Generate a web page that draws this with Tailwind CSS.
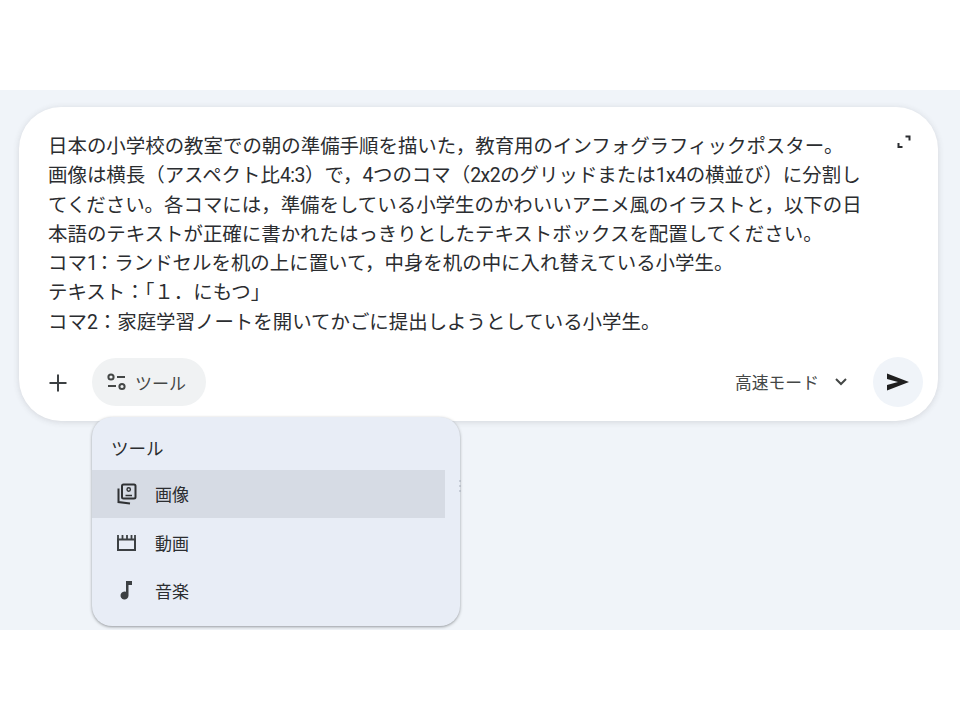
<!DOCTYPE html>
<html lang="ja">

<head>
    <meta charset="UTF-8">
    <title>ツール</title>
    <script src="https://cdn.jsdelivr.net/npm/@tailwindcss/browser@4"></script>
</head>

<body class="bg-white font-['Roboto','Noto_Sans_CJK_JP',sans-serif]">
    <div class="h-[720px] pt-[90px]">
        <section class="relative h-[540px] bg-[#f0f4f9] pl-[19px] pt-[17px]">
            <!-- prompt card -->
            <div class="relative flex h-[314px] w-[919px] flex-col rounded-[42px] bg-white shadow-[0_1px_6px_rgba(60,64,67,0.16)]">
                <div class="flex-1 whitespace-nowrap pl-[29px] pt-[25px] text-[19.45px] leading-[29.3px] text-[#2b2d30]">
                    <p>日本の小学校の教室での朝の準備手順を描いた，教育用のインフォグラフィックポスター。</p>
                    <p>画像は横長（アスペクト比<span class="tracking-[-0.5px]">4:3</span>）で，<span class="tracking-[-0.5px]">4</span>つのコマ（<span class="tracking-[-0.5px]">2x2</span>のグリッドまたは<span class="tracking-[-0.5px]">1x4</span>の横並び）に分割し</p>
                    <p>てください。各コマには，準備をしている小学生のかわいいアニメ風のイラストと，以下の日</p>
                    <p>本語のテキストが正確に書かれたはっきりとしたテキストボックスを配置してください。</p>
                    <p>コマ<span class="tracking-[-3px]">1</span>：ランドセルを机の上に置いて，中身を机の中に入れ替えている小学生。</p>
                    <p>テキスト：「１．にもつ」</p>
                    <p>コマ2：家庭学習ノートを開いてかごに提出しようとしている小学生。</p>
                </div>
                <svg class="absolute left-[877px] top-[27px] h-[16px] w-[16px]" viewBox="0 0 16 16" fill="none" stroke="#2b2d30" stroke-width="2">
                    <path d="M9.500 2.500h4v4M2.500 9v4h4" />
                </svg>
                <div class="mb-[14px] flex h-[50px] items-center">
                    <svg class="ml-[29px] mt-[1px] h-[20px] w-[20px]" viewBox="0 0 20 20" fill="none" stroke="#3c4043" stroke-width="2">
                        <path d="M10 1.500v17M1.500 10h17" />
                    </svg>
                    <div class="ml-[24px] flex h-[48px] w-[114px] items-center rounded-full bg-[#f0f2f3] pl-[15px]">
                        <svg class="h-[20px] w-[20px]" viewBox="0 0 20 20" fill="none" stroke="#444746" stroke-width="2">
                            <circle cx="4" cy="5" r="2.600" />
                            <path d="M10 5h8M1 14h8" />
                            <circle cx="15" cy="14.500" r="2.600" />
                        </svg>
                        <span class="ml-[8px] pt-[6px] text-[17px] text-[#444746]">ツール</span>
                    </div>
                    <span class="ml-[529px] pt-[3px] text-[16.800px] text-[#444746]">高速モード</span>
                    <svg class="ml-[15px] h-[14px] w-[14px]" viewBox="0 0 14 14" fill="none" stroke="#444746" stroke-width="2">
                        <path d="M2 4l5 5 5-5" />
                    </svg>
                    <div class="ml-[25px] flex h-[50px] w-[50px] items-center justify-center rounded-full bg-[#f0f4f9]">
                        <svg class="h-[24px] w-[24px]" viewBox="0 0 24 24" fill="#1f1f1f">
                            <path d="M1 3.500l22 8.500-22 8.500 0-5.500 11-3-11-3z" />
                        </svg>
                    </div>
                </div>
            </div>

            <!-- tools menu -->
            <div class="absolute left-[92px] top-[327px] h-[209px] w-[368px] rounded-[20px] bg-[#e8edf6] shadow-[0_1px_3px_rgba(60,64,67,0.5)]">
                <div class="flex h-[53px] items-center pl-[19px] pt-[11px] text-[17.500px] text-[#2b2d30]">ツール</div>
                <div class="flex h-[48px] w-[353px] items-center bg-[#d6dbe4]">
                    <svg class="ml-[23px] h-[22px] w-[22px]" viewBox="0 0 22 22" fill="none" stroke="#2f3133" stroke-width="2">
                        <rect x="7" y="1.500" width="13.500" height="14" rx="1.500" />
                        <path d="M3.500 5.500v13.500l11.500 1.500" />
                        <circle cx="13.700" cy="6.500" r="1.700" stroke-width="1.400" />
                        <path d="M10.500 12.500h6.500" stroke-width="1.500" />
                    </svg>
                    <span class="ml-[18px] pt-[3px] text-[17px] text-[#2b2d30]">画像</span>
                </div>
                <div class="flex h-[48px] items-center">
                    <svg class="ml-[23px] mt-[1px] h-[22px] w-[22px]" viewBox="0 0 22 22" fill="none" stroke="#3c4043" stroke-width="2">
                        <path d="M3 7.500h17v10.500h-17z" />
                        <path d="M3 8v-5M7.500 8v-5M12 8v-5M16.500 8v-5M20 8v-5" stroke-width="1.800" />
                    </svg>
                    <span class="ml-[18px] pt-[5px] text-[17px] text-[#2b2d30]">動画</span>
                </div>
                <div class="flex h-[48px] items-center">
                    <svg class="ml-[23px] h-[22px] w-[22px]" viewBox="0 0 22 22" fill="#3c4043">
                        <path d="M11 2h6v4h-3.500v10.500a4 4 0 1 1-2.500-3.700z" />
                    </svg>
                    <span class="ml-[18px] pt-[5px] text-[17px] text-[#2b2d30]">音楽</span>
                </div>
            </div>
            <!-- faint dots beside the menu -->
            <div class="absolute left-[459px] top-[390px] flex flex-col gap-[3px]">
                <span class="h-[2px] w-[2px] bg-gray-400/40"></span>
                <span class="h-[2px] w-[2px] bg-gray-400/40"></span>
                <span class="h-[2px] w-[2px] bg-gray-400/40"></span>
            </div>
        </section>
    </div>
</body>

</html>
